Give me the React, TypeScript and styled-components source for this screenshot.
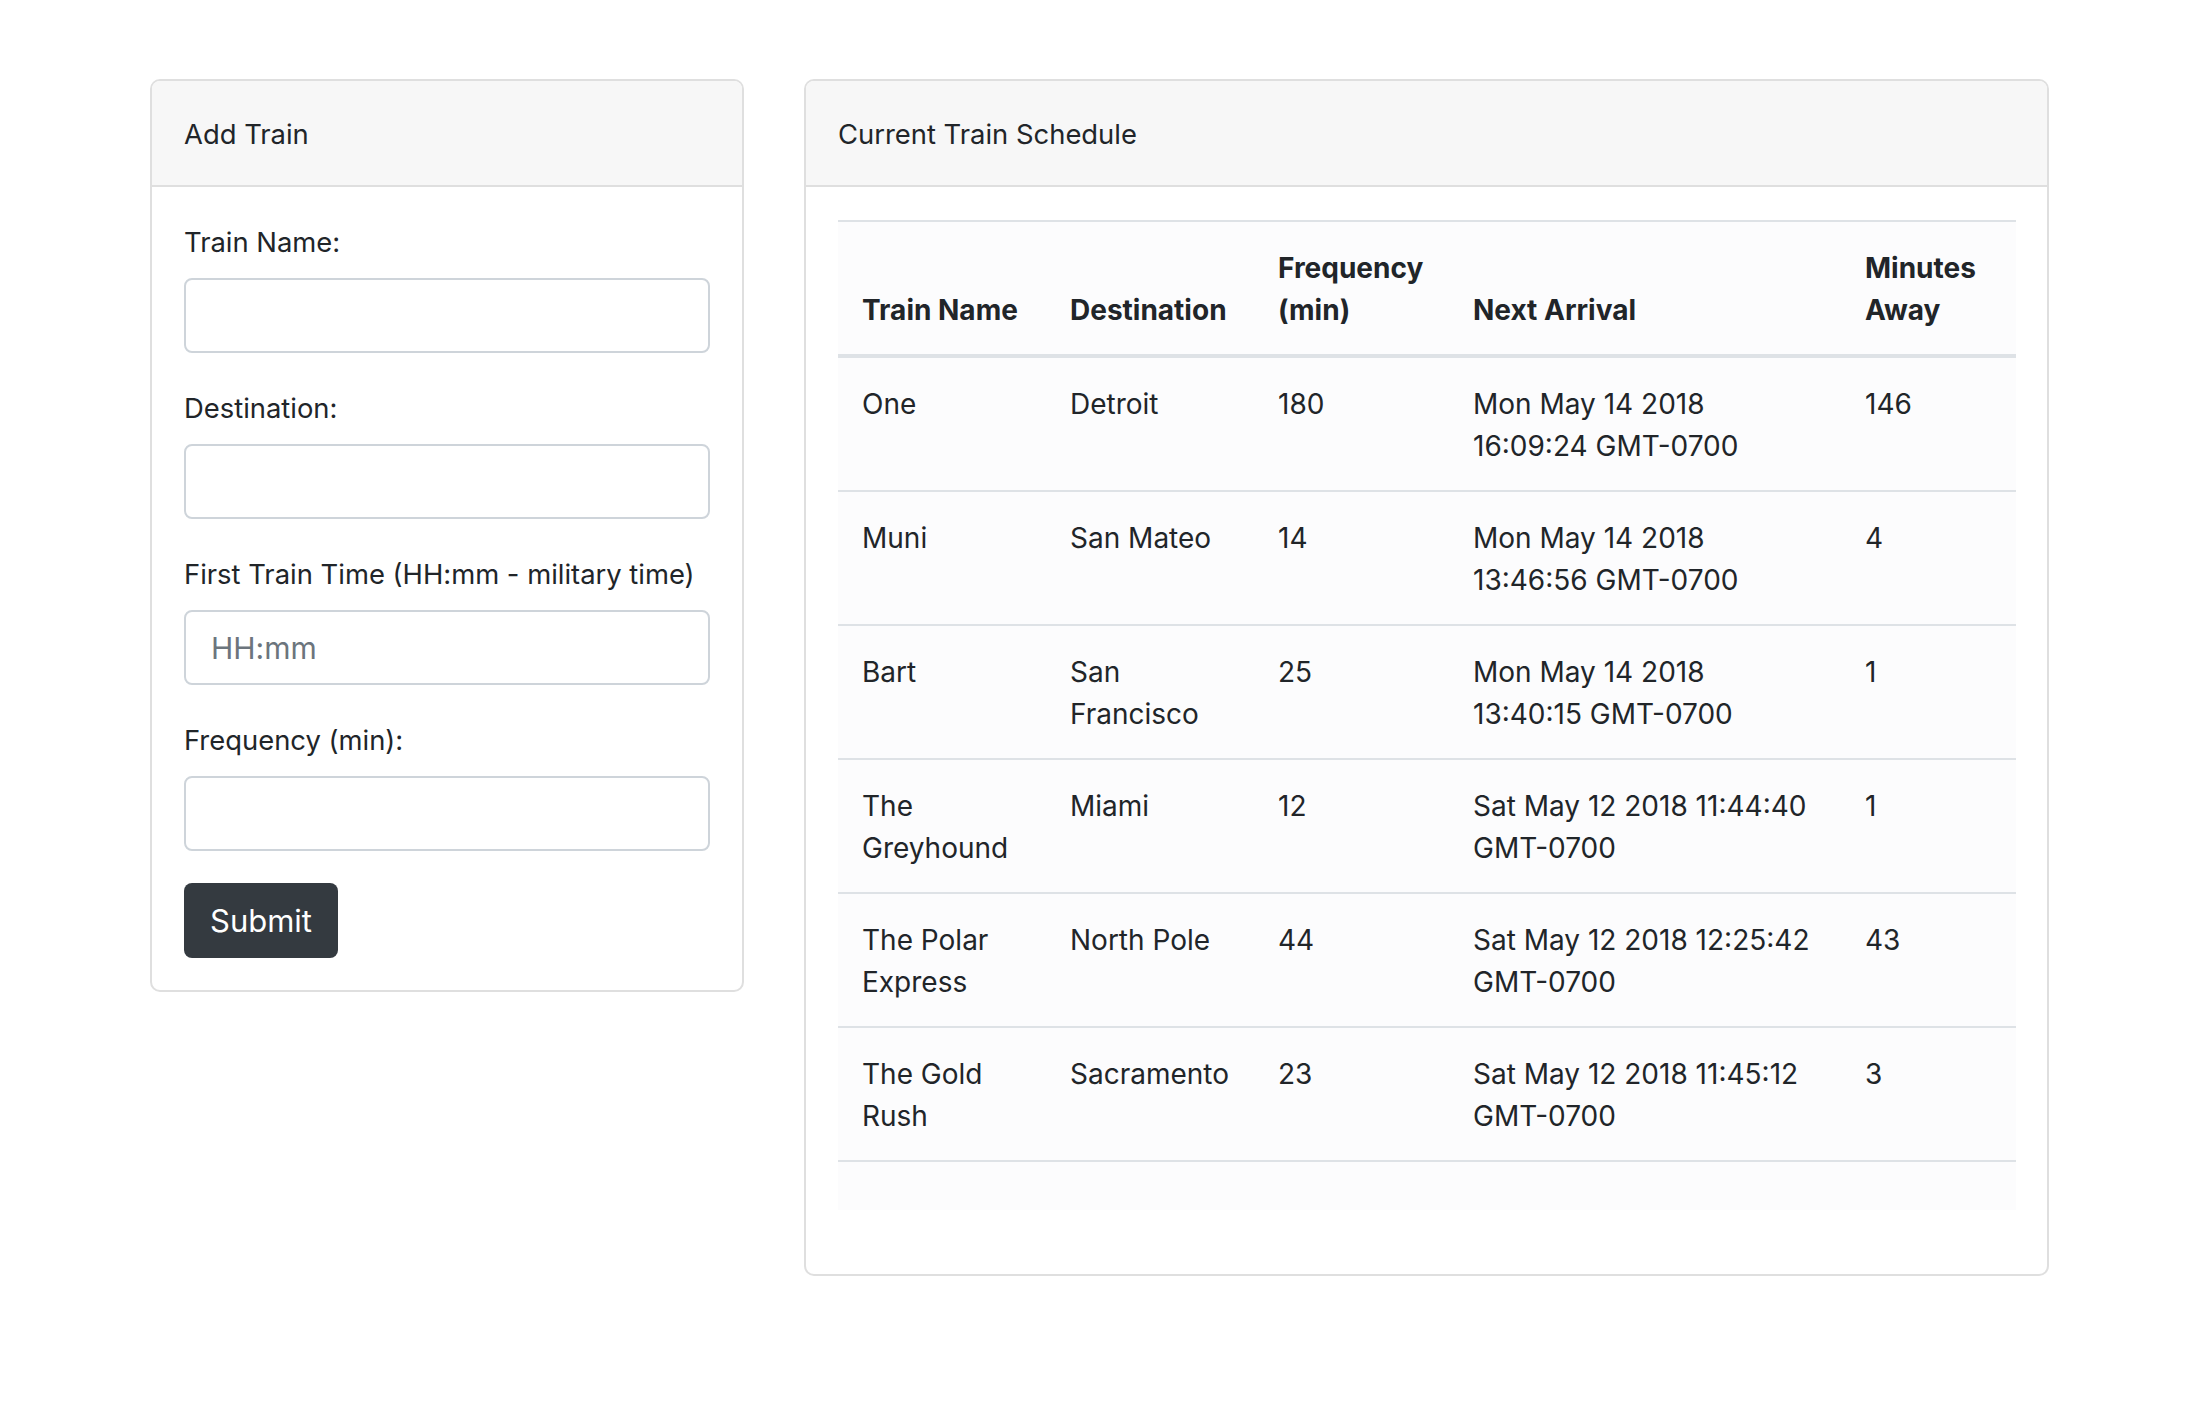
import React from "react";
import styled, { createGlobalStyle } from "styled-components";

const GlobalStyle = createGlobalStyle`
  html, body {
    margin: 0;
    padding: 0;
    background: #ffffff;
  }
  body {
    font-family: Inter, "Noto Sans", "Liberation Sans", sans-serif;
    color: #212529;
  }
  * { box-sizing: border-box; }
`;

const Page = styled.div`
  display: grid;
  grid-template-columns: 594px 1245px;
  column-gap: 60px;
  align-items: start;
  padding: 79px 0 0 150px;
`;

const Card = styled.section`
  display: flex;
  flex-direction: column;
  background: #ffffff;
  border: 2px solid #dfdfdf;
  border-radius: 10px;
  overflow: hidden;
`;

const CardHeader = styled.header`
  background: #f7f7f7;
  border-bottom: 2px solid #dfdfdf;
  padding: 32px 32px 30px;
  font-size: 27.4px;
  line-height: 42px;
  color: #212529;
`;

const CardBody = styled.div<{ $bottom: number }>`
  padding: 33px 32px ${(p) => p.$bottom}px;
`;

const Form = styled.form`
  display: flex;
  flex-direction: column;
  gap: 33px;
`;

const Field = styled.div`
  display: flex;
  flex-direction: column;
  gap: 15px;
`;

const Label = styled.label`
  padding-top: 1px;
  font-size: 27.4px;
  line-height: 42px;
  color: #212529;
`;

const Input = styled.input`
  height: 75px;
  width: 100%;
  border: 2px solid #ced4da;
  border-radius: 8px;
  padding: 0 25px;
  font-family: inherit;
  font-size: 30px;
  color: #495057;
  background: #ffffff;
  outline: none;
  &::placeholder {
    color: #6c757d;
  }
`;

const SubmitButton = styled.button`
  align-self: flex-start;
  height: 75px;
  margin-top: -1px;
  padding: 0 26px;
  border: none;
  border-radius: 8px;
  background: #343a40;
  color: #ffffff;
  font-family: inherit;
  font-size: 31px;
  cursor: pointer;
`;

const Table = styled.table`
  width: 100%;
  table-layout: fixed;
  border-collapse: collapse;
  background: #fcfcfd;
  margin-bottom: 31px;
  font-size: 28px;
  line-height: 42px;
  color: #212529;
`;

const HeadCell = styled.th`
  text-align: left;
  font-weight: 700;
  vertical-align: bottom;
  padding: 25px 24px 23px;
  border-top: 2px solid #dee2e6;
  border-bottom: 4px solid #dee2e6;
  white-space: pre;
`;

const Row = styled.tr<{ $last?: boolean }>`
  border-bottom: ${(p) => (p.$last ? "none" : "2px solid #dee2e6")};
`;

const Cell = styled.td`
  vertical-align: top;
  padding: 25px 24px 23px;
  white-space: pre;
`;

const columns = [
  { label: "Train Name", width: 208 },
  { label: "Destination", width: 208 },
  { label: "Frequency\n(min)", width: 195 },
  { label: "Next Arrival", width: 392 },
  { label: "Minutes\nAway", width: 175 },
];

const trains = [
  ["One", "Detroit", "180", "Mon May 14 2018\n16:09:24 GMT-0700", "146"],
  ["Muni", "San Mateo", "14", "Mon May 14 2018\n13:46:56 GMT-0700", "4"],
  ["Bart", "San\nFrancisco", "25", "Mon May 14 2018\n13:40:15 GMT-0700", "1"],
  ["The\nGreyhound", "Miami", "12", "Sat May 12 2018 11:44:40\nGMT-0700", "1"],
  ["The Polar\nExpress", "North Pole", "44", "Sat May 12 2018 12:25:42\nGMT-0700", "43"],
  ["The Gold\nRush", "Sacramento", "23", "Sat May 12 2018 11:45:12\nGMT-0700", "3"],
];

const fields = [
  { id: "name", label: "Train Name:", placeholder: "" },
  { id: "dest", label: "Destination:", placeholder: "" },
  { id: "first", label: "First Train Time (HH:mm - military time)", placeholder: "HH:mm" },
  { id: "freq", label: "Frequency (min):", placeholder: "" },
];

export default function App() {
  return (
    <>
      <GlobalStyle />
      <Page>
        <Card>
          <CardHeader>Add Train</CardHeader>
          <CardBody $bottom={32}>
            <Form onSubmit={(e) => e.preventDefault()}>
              {fields.map((f) => (
                <Field key={f.id}>
                  <Label htmlFor={f.id}>{f.label}</Label>
                  <Input id={f.id} type="text" placeholder={f.placeholder} />
                </Field>
              ))}
              <SubmitButton type="submit">Submit</SubmitButton>
            </Form>
          </CardBody>
        </Card>
        <Card>
          <CardHeader>Current Train Schedule</CardHeader>
          <CardBody $bottom={33}>
            <Table>
              <colgroup>
                {columns.map((c) => (
                  <col key={c.label} style={{ width: c.width }} />
                ))}
              </colgroup>
              <thead>
                <tr>
                  {columns.map((c) => (
                    <HeadCell key={c.label}>{c.label}</HeadCell>
                  ))}
                </tr>
              </thead>
              <tbody>
                {trains.map((t, i) => (
                  <Row key={i}>
                    {t.map((v, j) => (
                      <Cell key={j}>{v}</Cell>
                    ))}
                  </Row>
                ))}
                <Row $last>
                  {columns.map((c) => (
                    <Cell key={c.label} />
                  ))}
                </Row>
              </tbody>
            </Table>
          </CardBody>
        </Card>
      </Page>
    </>
  );
}
